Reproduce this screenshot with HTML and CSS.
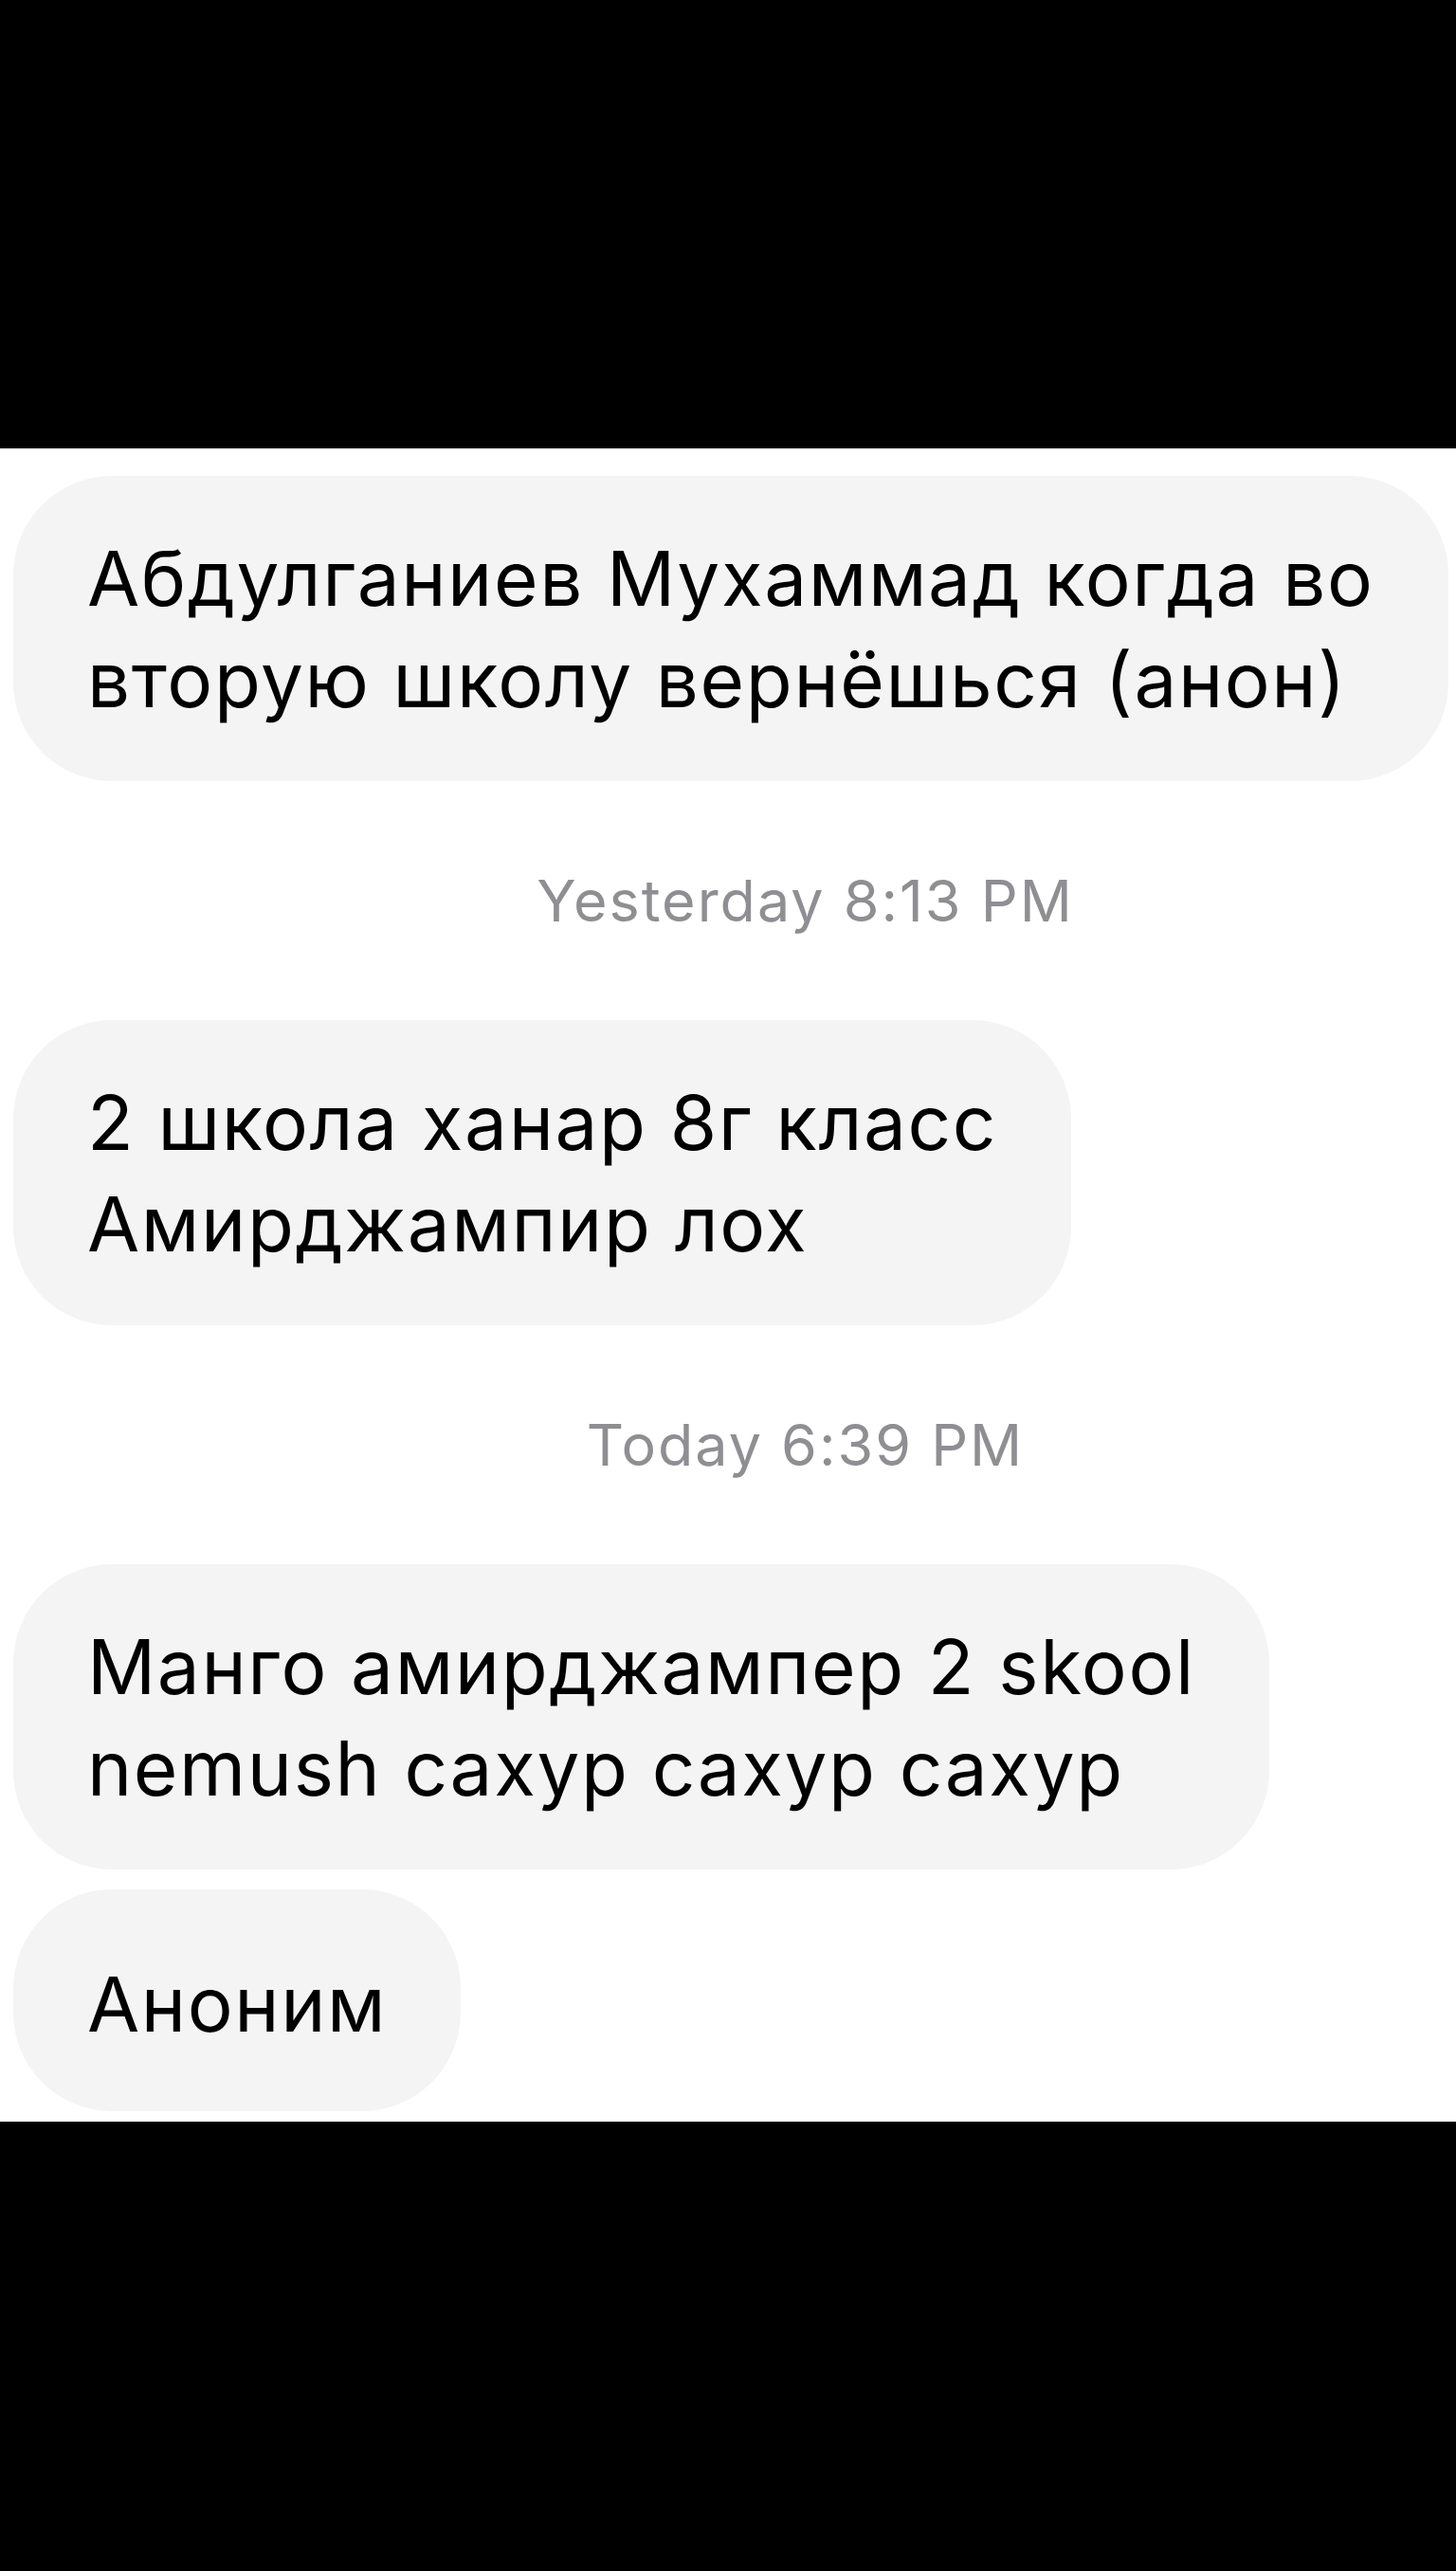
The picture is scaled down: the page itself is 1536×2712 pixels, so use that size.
FILE: index.html
```html
<!DOCTYPE html>
<html lang="ru">
<head>
<meta charset="utf-8">
<title>Сообщения</title>
<link rel="stylesheet" href="styles.css">
</head>
<body>
<div class="screen">
  <div class="bar bar-top"></div>
  <main class="chat">
    <div class="msg"><p class="bubble">Абдулганиев Мухаммад когда во<br>вторую школу вернёшься (анон)</p></div>
    <div class="stamp">Yesterday 8:13 PM</div>
    <div class="msg"><p class="bubble">2 школа ханар 8г класс<br>Амирджампир лох</p></div>
    <div class="stamp">Today 6:39 PM</div>
    <div class="msg"><p class="bubble">Манго амирджампер 2 skool<br>nemush сахур сахур сахур</p></div>
    <div class="msg msg-tight"><p class="bubble bubble-single">Аноним</p></div>
  </main>
  <div class="bar bar-bottom"></div>
</div>
</body>
</html>
```

FILE: styles.css
```css
* { box-sizing: border-box; }

html, body {
  margin: 0;
  padding: 0;
  background: #000;
}

.screen {
  width: 1536px;
  display: flex;
  flex-direction: column;
}

.bar-top { height: 473px; background: #000; }
.bar-bottom { height: 474px; background: #000; }

.chat {
  background: #fff;
  padding: 29px 15px 11px 14px;
  display: flex;
  flex-direction: column;
  font-family: Inter, "Noto Sans", "Liberation Sans", sans-serif;
}

.msg {
  display: flex;
  justify-content: flex-start;
}

.msg-tight { margin-top: 21px; }

.bubble {
  margin: 0;
  background: #f4f4f4;
  color: #000;
  font-size: 80px;
  line-height: 107px;
  letter-spacing: 1.6px;
  padding: 54px 78px 54px 78px;
  border-radius: 104px;
  white-space: nowrap;
}

.bubble-single {
  padding-top: 67px;
  padding-bottom: 60px;
}

.stamp {
  margin: 90px 0;
  padding-left: 164px;
  text-align: center;
  color: #8e8e93;
  font-size: 61px;
  line-height: 72px;
  letter-spacing: 2px;
}
```
